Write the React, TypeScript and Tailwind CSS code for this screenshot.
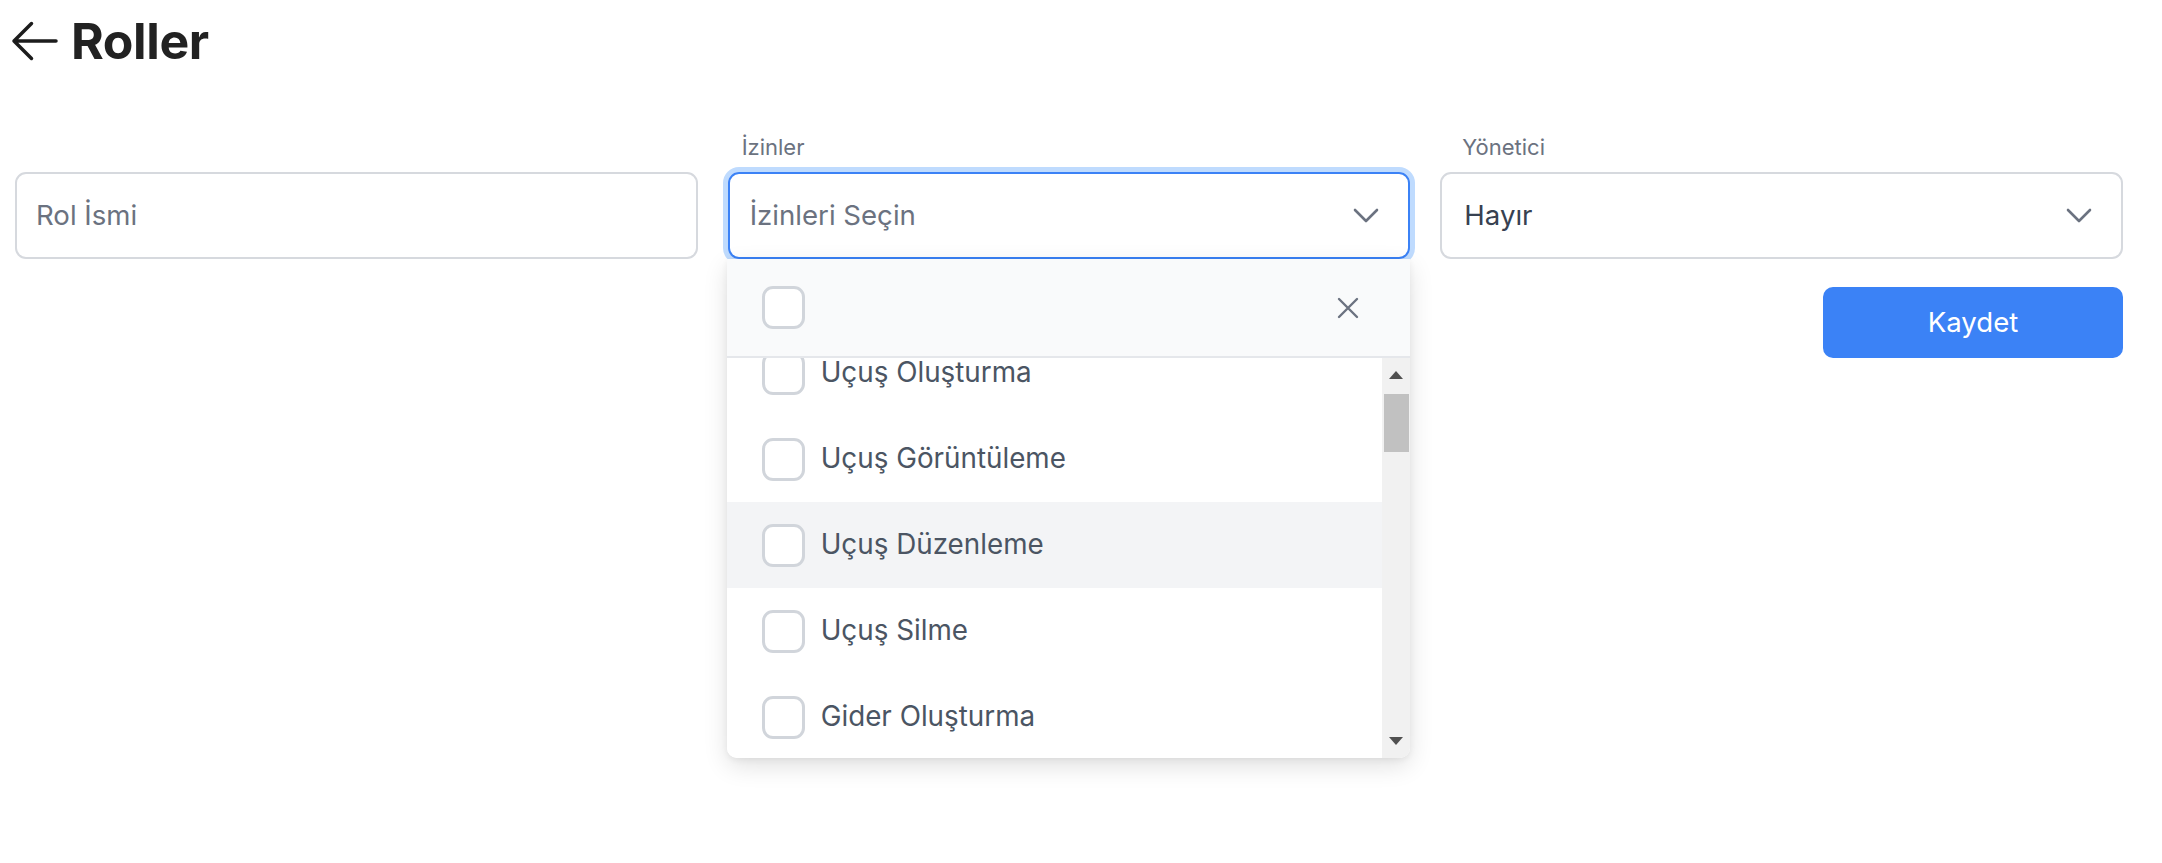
import React from "react";

const items = [
  "Uçuş Oluşturma",
  "Uçuş Görüntüleme",
  "Uçuş Düzenleme",
  "Uçuş Silme",
  "Gider Oluşturma",
  "Gider Görüntüleme",
];

function Chevron() {
  return (
    <svg width="28" height="18" viewBox="0 0 28 18" fill="none" className="shrink-0">
      <path d="M3 3 L14 14 L25 3" stroke="#6b7280" strokeWidth="2.6" strokeLinecap="round" strokeLinejoin="round" />
    </svg>
  );
}

function Checkbox() {
  return <div className="w-[43px] h-[43px] shrink-0 rounded-[11px] border-[3px] border-[#d1d5db] bg-white" />;
}

export default function App() {
  return (
    <div className="min-h-screen w-full bg-white font-['Inter','Noto_Sans',sans-serif]">
      <div className="flex items-center pl-[7px] pt-[13px]">
        <svg width="56" height="56" viewBox="0 0 24 24" fill="none" className="shrink-0">
          <path d="M10.5 19.5 3 12m0 0 7.5-7.5M3 12h18" stroke="#1c1c1c" strokeWidth="1.5" strokeLinecap="round" strokeLinejoin="round" />
        </svg>
        <h1 className="ml-[8px] text-[50px] leading-[56px] font-bold text-[#222222] tracking-[-0.4px]">Roller</h1>
      </div>

      <div className="ml-[15px] w-[2108px] mt-[64px]">
        <div className="grid grid-cols-3 gap-x-[30px]">
          <div className="flex flex-col">
            <div className="h-[28px] mb-[11px]" />
            <div className="h-[87px] rounded-[11px] border-2 border-[#d6d9de] flex items-center pl-[19px]">
              <span className="text-[27.6px] text-[#6b7280]">Rol İsmi</span>
            </div>
          </div>
          <div className="flex flex-col">
            <div className="h-[28px] mb-[11px] pl-[14px] text-[22px] leading-[28px] text-[#6b7280]">İzinler</div>
            <div className="relative">
              <div className="h-[87px] rounded-[11px] border-2 border-[#3b82f6] ring-[5px] ring-[#bfdbfe] flex items-center justify-between pl-[20px] pr-[28px]">
                <span className="text-[27.6px] text-[#6b7280]">İzinleri Seçin</span>
                <Chevron />
              </div>
              <div className="absolute left-[-1px] right-0 top-full z-10 bg-white rounded-b-[10px] shadow-[0_8px_24px_rgba(0,0,0,0.12),0_2px_6px_rgba(0,0,0,0.06)] overflow-hidden">
                <div className="h-[99px] bg-[#f9fafb] border-b-2 border-[#e5e7eb] flex items-center justify-between pl-[35px] pr-[50px]">
                  <Checkbox />
                  <svg width="24" height="24" viewBox="0 0 24 24" fill="none">
                    <path d="M3 3 L21 21 M21 3 L3 21" stroke="#6b7280" strokeWidth="2.4" strokeLinecap="round" />
                  </svg>
                </div>
                <div className="flex h-[400px]">
                  <div className="flex-1 overflow-hidden">
                    <div className="-mt-[28px]">
                      {items.map((it, i) => (
                        <div
                          key={it}
                          className={
                            "h-[86px] flex items-center gap-[16px] pl-[35px] " +
                            (i === 2 ? "bg-[#f3f4f6]" : "bg-white")
                          }
                        >
                          <Checkbox />
                          <span className="text-[27.8px] text-[#4b5563]">{it}</span>
                        </div>
                      ))}
                    </div>
                  </div>
                  <div className="w-[28px] bg-[#f1f1f1] flex flex-col items-center relative">
                    <svg width="14" height="8" viewBox="0 0 14 8" className="mt-[13px]">
                      <path d="M7 0 L14 8 L0 8 Z" fill="#505050" />
                    </svg>
                    <div className="mt-[15px] w-[25px] h-[58px] bg-[#c1c1c1]" />
                    <div className="flex-1" />
                    <svg width="14" height="8" viewBox="0 0 14 8" className="mb-[13px]">
                      <path d="M0 0 L14 0 L7 8 Z" fill="#505050" />
                    </svg>
                  </div>
                </div>
              </div>
            </div>
          </div>
          <div className="flex flex-col">
            <div className="h-[28px] mb-[11px] pl-[22px] text-[22px] leading-[28px] text-[#6b7280]">Yönetici</div>
            <div className="h-[87px] rounded-[11px] border-2 border-[#d6d9de] flex items-center justify-between pl-[22px] pr-[28px]">
              <span className="text-[27.6px] text-[#374151]">Hayır</span>
              <Chevron />
            </div>
          </div>
        </div>
        <div className="flex justify-end mt-[28px]">
          <button className="w-[300px] h-[71px] rounded-[10px] bg-[#3b82f6] text-white text-[27.6px]">Kaydet</button>
        </div>
      </div>
    </div>
  );
}
